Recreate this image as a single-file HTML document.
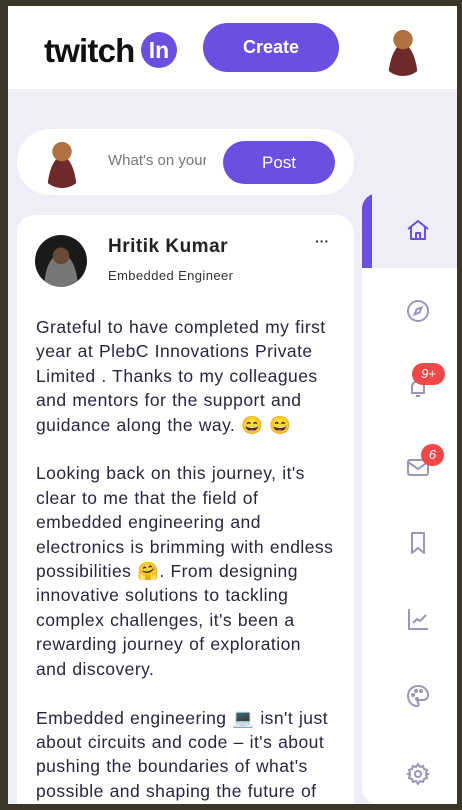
<!DOCTYPE html>
<html><head><meta charset="utf-8"><style>
*{margin:0;padding:0;box-sizing:border-box}
body{width:462px;height:810px;background:#3a3726;position:relative;overflow:hidden;font-family:"Liberation Sans",sans-serif}
.frame{position:absolute;left:8px;top:6px;width:449px;height:798px;background:#efedf7;overflow:hidden}
.hdr{position:absolute;left:0;top:0;width:449px;height:83px;background:#fff}
.logo{position:absolute;left:36px;top:26px;font-weight:bold;font-size:33px;letter-spacing:-0.8px;color:#111}
.in{position:absolute;left:133px;top:26px;width:36px;height:36px;border-radius:50%;background:#6a4fe0;color:#fff;font-size:23px;font-weight:bold;text-align:center;line-height:36px}
.create{position:absolute;left:195px;top:17px;width:136px;height:49px;border-radius:25px;background:#6a4fe0;color:#fff;font-weight:bold;font-size:18px;text-align:center;line-height:49px}
.av{position:absolute;border-radius:50%;overflow:hidden}
.face{background:radial-gradient(circle at 50% 30%,#b07040 0 22%,transparent 23%),radial-gradient(ellipse at 50% 110%,#6e2a2a 0 45%,transparent 46%),#fff}
.comp{position:absolute;left:9px;top:123px;width:337px;height:66px;border-radius:33px;background:#fff}
.ph{position:absolute;left:91px;top:23px;font-size:15px;color:#777;width:98px;overflow:hidden;white-space:nowrap}
.post{position:absolute;left:206px;top:12px;width:112px;height:43px;border-radius:22px;background:#6a4fe0;color:#fff;font-size:17px;text-align:center;line-height:43px}
.card{position:absolute;left:9px;top:209px;width:337px;height:620px;border-radius:18px;background:#fff}
.name{position:absolute;left:91px;top:21px;font-size:19px;font-weight:bold;color:#222;letter-spacing:0.5px}
.role{position:absolute;left:91px;top:53px;font-size:13px;color:#333;letter-spacing:0.4px}
.dots{position:absolute;left:298px;top:18px;font-size:14px;font-weight:bold;color:#333}
.txt{position:absolute;left:19px;top:100px;font-size:17.5px;line-height:24.4px;color:#262640;letter-spacing:0.45px;word-spacing:0.5px;white-space:nowrap}
.side{position:absolute;left:354px;top:187px;width:95px;height:611px;border-radius:16px 0 0 16px;background:#fff;overflow:hidden}
.act{position:absolute;left:0;top:0;width:95px;height:75px;background:#efedf7}
.bar{position:absolute;left:0;top:0;width:10px;height:75px;background:#6a4fe0;border-radius:16px 0 0 0}
.ic{position:absolute;left:44px}
.badge{position:absolute;background:#f04848;color:#fff;font-size:13px;font-style:italic;text-align:center;border-radius:11px;height:22px;line-height:22px}
</style></head><body>
<div class="frame">
<div class="hdr">
<div class="logo">twitch</div><div class="in">In</div>
<div class="create">Create</div>
<div class="av face" style="left:372px;top:18px;width:46px;height:52px;border-radius:0 0 23px 23px"></div>
</div>
<div class="comp">
<div class="av face" style="left:22px;top:7px;width:46px;height:52px;border-radius:0 0 23px 23px"></div>
<div class="ph">What's on your mind</div>
<div class="post">Post</div>
</div>
<div class="card">
<div class="av" style="left:18px;top:20px;width:52px;height:52px;background:radial-gradient(circle at 50% 40%,#6a4a35 0 20%,transparent 21%),radial-gradient(ellipse at 50% 100%,#777 0 45%,transparent 46%),#1a1a1a"></div>
<div class="name">Hritik Kumar</div>
<div class="role">Embedded Engineer</div>
<div class="dots">···</div>
<div class="txt">Grateful to have completed my first<br>year at PlebC Innovations Private<br>Limited . Thanks to my colleagues<br>and mentors for the support and<br>guidance along the way. 😄 😄<br><br>Looking back on this journey, it's<br>clear to me that the field of<br>embedded engineering and<br>electronics is brimming with endless<br>possibilities 🤗. From designing<br>innovative solutions to tackling<br>complex challenges, it's been a<br>rewarding journey of exploration<br>and discovery.<br><br>Embedded engineering 💻 isn't just<br>about circuits and code – it's about<br>pushing the boundaries of what's<br>possible and shaping the future of</div>
</div>
<div class="side">
<div class="act"></div><div class="bar"></div>
<svg class="ic" style="top:25px" width="24" height="24" viewBox="0 0 24 24" fill="none" stroke="#6a4fe0" stroke-width="2" stroke-linejoin="round"><path d="M2 11L12 3l10 8M5 9v12h14V9M10 21v-6h4v6"/></svg>
<svg class="ic" style="top:106px" width="24" height="24" viewBox="0 0 24 24" fill="none" stroke="#9a98b8" stroke-width="2"><circle cx="12" cy="12" r="10"/><path d="M15.5 8.5l-2 5-5 2 2-5z"/></svg>
<svg class="ic" style="top:183px" width="24" height="24" viewBox="0 0 24 24" fill="none" stroke="#9a98b8" stroke-width="2"><path d="M6 17V11a6 6 0 0112 0v6H5h14M10 20h4"/></svg>
<div class="badge" style="left:50px;top:170px;width:33px">9+</div>
<svg class="ic" style="top:262px" width="24" height="24" viewBox="0 0 24 24" fill="none" stroke="#9a98b8" stroke-width="2"><rect x="2" y="5" width="20" height="15" rx="2"/><path d="M2 7l10 7 10-7"/></svg>
<div class="badge" style="left:59px;top:251px;width:23px">6</div>
<svg class="ic" style="top:338px" width="24" height="24" viewBox="0 0 24 24" fill="none" stroke="#9a98b8" stroke-width="2" stroke-linejoin="round"><path d="M6 2h12v20l-6-5-6 5z"/></svg>
<svg class="ic" style="top:414px" width="24" height="24" viewBox="0 0 24 24" fill="none" stroke="#9a98b8" stroke-width="2"><path d="M3 2v20h19M7 16l4-4 3 2 6-6"/></svg>
<svg class="ic" style="top:491px" width="24" height="24" viewBox="0 0 24 24" fill="none" stroke="#9a98b8" stroke-width="2"><path d="M12 2C6 2 2 6.5 2 12s4 10 9 10c2 0 2-2 1-3s0-3 2-3h3c3 0 5-2 5-5 0-5-4-9-10-9z"/><circle cx="7" cy="11" r="1" fill="#9a98b8"/><circle cx="10" cy="7" r="1" fill="#9a98b8"/><circle cx="15" cy="7" r="1" fill="#9a98b8"/><circle cx="11" cy="15" r="1" fill="#9a98b8"/></svg>
<svg class="ic" style="top:569px" width="24" height="24" viewBox="0 0 24 24" fill="none" stroke="#9a98b8" stroke-width="2"><circle cx="12" cy="12" r="3"/><path d="M12 2l2 3 3-1 1 3 3 1-1 3 2 1-2 1 1 3-3 1-1 3-3-1-2 3-2-3-3 1-1-3-3-1 1-3-2-1 2-1-1-3 3-1 1-3 3 1z"/></svg>
</div>
</div>
</body></html>
